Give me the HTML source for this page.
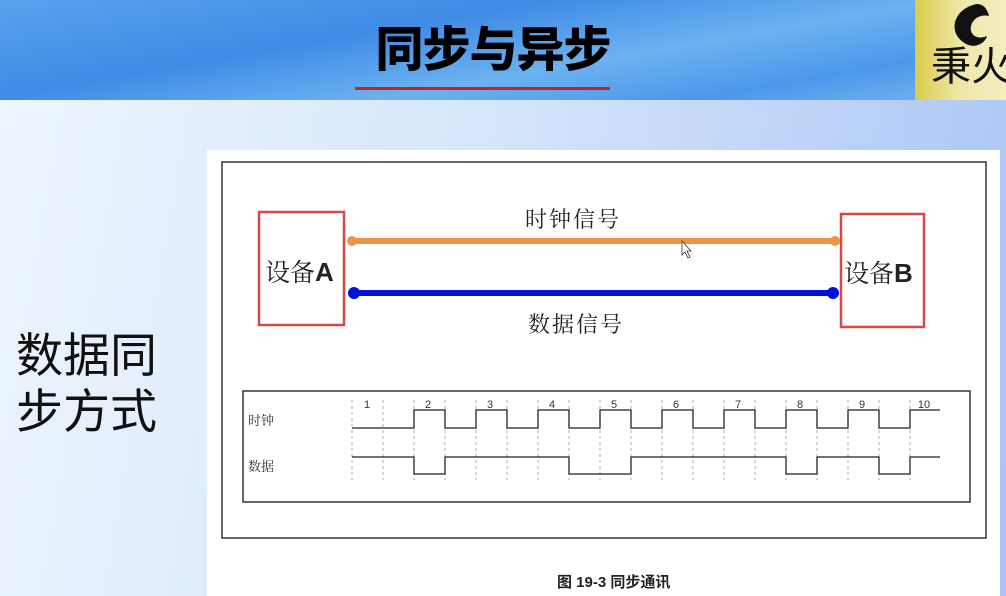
<!DOCTYPE html>
<html><head><meta charset="utf-8"><style>
body{margin:0;width:1006px;height:596px;overflow:hidden;position:relative;font-family:"Liberation Sans","Noto Sans CJK SC",sans-serif;background:linear-gradient(100deg,#eef6fd 0%,#d6e6fa 45%,#a9c4f5 100%)}
.top{position:absolute;left:0;top:0;width:1006px;height:100px;background:linear-gradient(170deg,#5aa2ec 0%,#3f8be6 35%,#6cb2f0 60%,#4c97ea 80%,#7ab9f2 100%)}
.logo{position:absolute;left:915px;top:0;width:91px;height:100px;background:linear-gradient(90deg,#d9cc4a,#efe7a8 50%,#f3eec0)}
.title{position:absolute;left:0;width:986px;top:10px;text-align:center;font-size:48px;font-weight:900;color:#000;letter-spacing:-1px;font-family:"Noto Sans CJK SC",sans-serif}
.red{position:absolute;left:355px;top:87px;width:255px;height:3px;background:#d81a1a}
.left{position:absolute;left:16px;top:324px;font-size:47px;line-height:56px;color:#111;font-family:"Noto Sans CJK SC",sans-serif}
</style></head><body>
<div class="top"></div>
<div class="title">同步与异步</div>
<div class="red"></div>
<div class="logo"><svg width="91" height="100"><path d="M62 4 C40 8 32 30 48 42 C58 50 70 44 72 36 C64 40 54 36 56 26 C58 18 66 14 74 16 C72 8 68 4 62 4Z" fill="#111"/><text x="16" y="80" font-size="40" font-family="Noto Sans CJK SC,sans-serif" fill="#111">秉火</text></svg></div>
<div class="left">数据同<br>步方式</div>
<svg style="position:absolute;left:0;top:0" width="1006" height="596">
<rect x="207" y="150" width="793" height="446" fill="#fff"/>
<rect x="222" y="162" width="764" height="376" fill="none" stroke="#333" stroke-width="1.5"/>
<rect x="259" y="212" width="85" height="113" fill="none" stroke="#d24a4a" stroke-width="2.5"/>
<rect x="841" y="214" width="83" height="113" fill="none" stroke="#d24a4a" stroke-width="2.5"/>
<g font-family="Noto Serif CJK SC,serif" fill="#222">
<text x="265" y="281" font-size="25">设备<tspan font-family="Liberation Sans" font-weight="bold" font-size="26">A</tspan></text>
<text x="844" y="282" font-size="25">设备<tspan font-family="Liberation Sans" font-weight="bold" font-size="26">B</tspan></text>
<text x="525" y="227" font-size="22" letter-spacing="2">时钟信号</text>
<text x="528" y="332" font-size="22" letter-spacing="2">数据信号</text>
</g>
<line x1="352" y1="241" x2="835" y2="241" stroke="#ee9448" stroke-width="6"/>
<circle cx="352" cy="241" r="5" fill="#ee9448"/><circle cx="835" cy="241" r="5" fill="#ee9448"/>
<line x1="354" y1="293" x2="833" y2="293" stroke="#0010d8" stroke-width="6"/>
<circle cx="354" cy="293" r="6" fill="#0010d8"/><circle cx="833" cy="293" r="6" fill="#0010d8"/>
<path d="M682 241 l0 14 l3 -3 l3 6 l2 -1 l-3 -6 l4 0z" fill="#fff" stroke="#333" stroke-width="0.8"/>
<rect x="243" y="391" width="727" height="111" fill="none" stroke="#333" stroke-width="1.5"/>
<g font-family="Noto Serif CJK SC,serif" font-size="13" fill="#333">
<text x="248" y="425">时钟</text><text x="248" y="471">数据</text></g>
<g font-family="Liberation Sans" font-size="11" fill="#333" text-anchor="middle">
<text x="367" y="408">1</text><text x="428" y="408">2</text><text x="490" y="408">3</text><text x="552" y="408">4</text><text x="614" y="408">5</text><text x="676" y="408">6</text><text x="738" y="408">7</text><text x="800" y="408">8</text><text x="862" y="408">9</text><text x="924" y="408">10</text></g>
<g stroke="#999" stroke-width="0.8" stroke-dasharray="3,3">
<line x1="352" y1="400" x2="352" y2="480"/><line x1="383" y1="400" x2="383" y2="480"/><line x1="414" y1="400" x2="414" y2="480"/><line x1="445" y1="400" x2="445" y2="480"/><line x1="476" y1="400" x2="476" y2="480"/><line x1="507" y1="400" x2="507" y2="480"/><line x1="538" y1="400" x2="538" y2="480"/><line x1="569" y1="400" x2="569" y2="480"/><line x1="600" y1="400" x2="600" y2="480"/><line x1="631" y1="400" x2="631" y2="480"/><line x1="662" y1="400" x2="662" y2="480"/><line x1="693" y1="400" x2="693" y2="480"/><line x1="724" y1="400" x2="724" y2="480"/><line x1="755" y1="400" x2="755" y2="480"/><line x1="786" y1="400" x2="786" y2="480"/><line x1="817" y1="400" x2="817" y2="480"/><line x1="848" y1="400" x2="848" y2="480"/><line x1="879" y1="400" x2="879" y2="480"/><line x1="910" y1="400" x2="910" y2="480"/></g>
<g fill="none" stroke="#222" stroke-width="1.3">
<path d="M352 428H414V410H445V428H476V410H507V428H538V410H569V428H600V410H631V428H662V410H693V428H724V410H755V428H786V410H817V428H848V410H879V428H910V410H940"/>
<path d="M352 457H414V474H445V457H569V474H631V457H786V474H817V457H879V474H910V457H940"/>
</g>
<text x="557" y="587" font-family="Liberation Sans,Noto Sans CJK SC,sans-serif" font-size="15" font-weight="bold" fill="#222">图 19-3 同步通讯</text>
</svg>
</body></html>
